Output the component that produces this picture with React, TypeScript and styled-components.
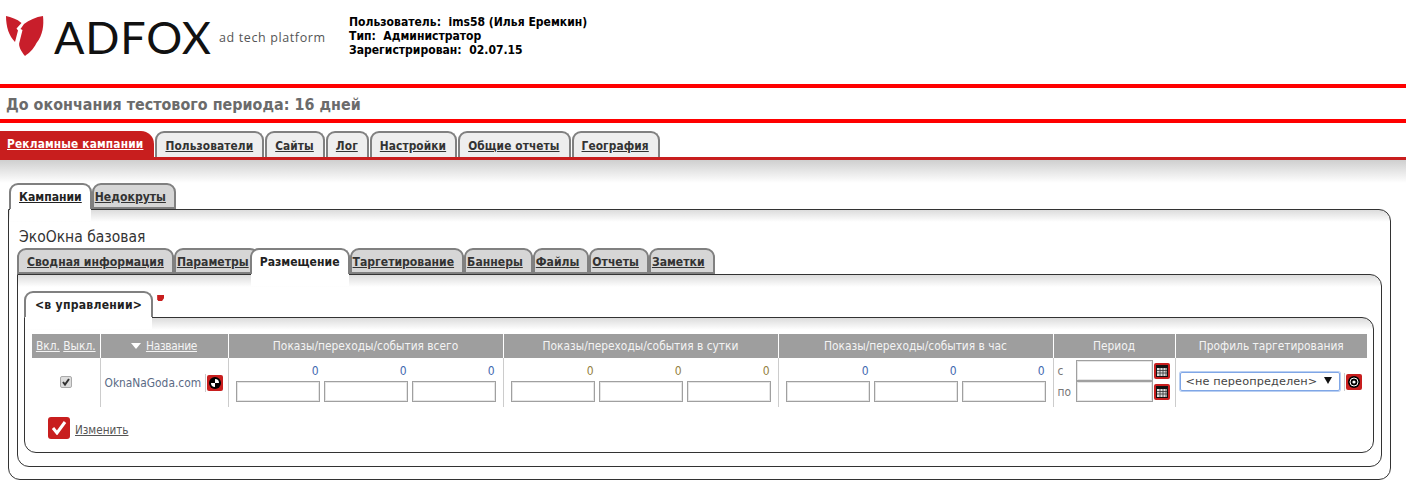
import React from "react";
import styled, { createGlobalStyle } from "styled-components";

const Global = createGlobalStyle`
  html, body { margin: 0; padding: 0; background: #fff; }
  body { font-family: "DejaVu Sans", Verdana, sans-serif; font-stretch: condensed; color: #333; }
  * { box-sizing: border-box; }
`;

const Page = styled.div`
  width: 1406px;
  height: 481px;
  overflow: hidden;
`;

const Header = styled.header`
  height: 84px;
  display: flex;
  align-items: flex-start;
`;

const LogoMark = styled.svg`
  width: 40px;
  height: 42px;
  margin: 15px 0 0 6px;
  flex: none;
`;

const LogoText = styled.div`
  font-family: Lato, sans-serif;
  font-stretch: normal;
  font-size: 45px;
  line-height: 45px;
  letter-spacing: 0.8px;
  color: #111;
  margin: 15px 0 0 8px;
  width: 165px;
`;

const Tagline = styled.div`
  font-family: "Open Sans", sans-serif;
  font-stretch: normal;
  font-size: 12.5px;
  letter-spacing: 0.62px;
  color: #555;
  margin: 29px 0 0 0;
  width: 130px;
  white-space: nowrap;
`;

const UserInfo = styled.div`
  margin-top: 15px;
  font-size: 12.05px;
  line-height: 14px;
  font-weight: 700;
  color: #000;
  white-space: pre;
`;

const Notice = styled.div`
  height: 39px;
  border-top: 4px solid #f00;
  border-bottom: 4px solid #f00;
  padding-left: 6px;
  font-size: 15.9px;
  letter-spacing: 0.03px;
  line-height: 33px;
  font-weight: 700;
  color: #6b6b6b;
  overflow: hidden;
`;

const MainTabs = styled.nav`
  display: flex;
  gap: 1px;
  margin-top: 8px;
  height: 26px;
`;

const MainTab = styled.a<{ $active?: boolean }>`
  height: 26px;
  font-size: 11.8px;
  letter-spacing: ${(p) => (p.$active ? "0.17px" : "0.1px")};
  line-height: 26px;
  font-weight: 700;
  text-decoration: underline;
  white-space: nowrap;
  background: ${(p) => (p.$active ? "#c81e1e" : "#eeeeee")};
  color: ${(p) => (p.$active ? "#fff" : "#333")};
  border: ${(p) => (p.$active ? "none" : "2px solid #808080")};
  border-bottom: none;
  padding: 0 ${(p) => (p.$active ? "11px" : "9px")} 0 ${(p) => (p.$active ? "7px" : "8px")};
  border-radius: ${(p) => (p.$active ? "0 13px 0 0" : "9px 9px 0 0")};
`;

const RedRule = styled.div`
  height: 3px;
  background: #c81e1e;
`;

const Fade = styled.div`
  height: 23px;
  background: linear-gradient(#cfcfcf, #fff);
`;

const Tabs = styled.div<{ $indent: number }>`
  display: flex;
  height: 26px;
  margin-left: ${(p) => p.$indent}px;
  position: relative;
  z-index: 1;
  align-items: flex-start;
`;

const Tab = styled.a<{ $active?: boolean; $tight?: boolean; $plain?: boolean; $overlap?: boolean }>`
  position: relative;
  height: 26px;
  padding: 0 8px 0 ${(p) => (p.$tight ? "1px" : "8px")};
  margin-left: ${(p) => (p.$overlap ? "-9px" : "0")};
  z-index: ${(p) => (p.$active ? 1 : 0)};
  font-size: 12.1px;
  line-height: 24px;
  font-weight: 700;
  color: ${(p) => (p.$active ? "#222" : "#333")};
  white-space: nowrap;
  text-decoration: ${(p) => (p.$plain ? "none" : "underline")};
  border: 2px solid #808080;
  border-bottom: ${(p) => (p.$active ? "none" : "2px solid #808080")};
  border-radius: 9px 9px 0 0;
  background: ${(p) => (p.$active ? "#fff" : "#d6d6d6")};

  &::after {
    content: "";
    display: ${(p) => (p.$active ? "block" : "none")};
    position: absolute;
    top: 100%;
    left: -1px;
    right: -1px;
    height: 12px;
    background: #fff;
  }
`;

const StateTab = styled(Tab)`
  letter-spacing: 0.25px;
  padding: 0 9px 0 9px;
`;

const Panel = styled.section<{ $mr: number; $h: number }>`
  margin: 0 ${(p) => p.$mr}px 0 0;
  height: ${(p) => p.$h}px;
  border: 1px solid #333;
  border-radius: 0 12px 12px 12px;
  background: linear-gradient(#dcdcdc, #fff 12px);
  position: relative;
`;

const OuterWrap = styled.div`
  padding-left: 8px;
`;

const CampaignTitle = styled.h1`
  margin: 0;
  padding: 17px 0 0 10px;
  height: 38px;
  font-size: 15.5px;
  line-height: 20px;
  font-weight: 400;
  color: #333;
`;

const InnerArea = styled.div<{ $pad: string }>`
  padding: ${(p) => p.$pad};
`;

const TabRow = styled.div`
  display: flex;
  align-items: flex-start;
`;

const CloseDot = styled.span`
  width: 7px;
  height: 6px;
  background: #c81e1e;
  margin: 4px 0 0 4px;
  clip-path: polygon(0 0, 100% 0, 100% 50%, 70% 100%, 15% 100%, 0 70%);
`;

const Grid = styled.table`
  border-collapse: collapse;
  table-layout: fixed;
  width: 1335px;
  margin: 16px 0 0 7px;
  font-size: 11.85px;
`;

const HeadCell = styled.th`
  height: 24px;
  padding: 0;
  background: #9e9e9e;
  color: #f4f4f4;
  font-weight: 400;
  text-align: center;
  border-left: 1px solid #fff;
  &:first-child { border-left: none; }
  a { color: #f4f4f4; text-decoration: underline; }
`;

const SortLink = styled.a`
  letter-spacing: -0.3px;
`;

const BodyCell = styled.td`
  height: 49px;
  padding: 0;
  border-left: 1px solid #ccc;
  vertical-align: top;
  &:first-child { border-left: none; }
`;

const CheckBox = styled.span`
  display: block;
  width: 12px;
  height: 12px;
  margin: 18px 0 0 28px;
  border: 1px solid #aaa;
  border-radius: 2px;
  background: #ddd;
  svg { display: block; }
`;

const NameWrap = styled.div`
  display: flex;
  align-items: center;
  height: 49px;
  padding-left: 4px;
  color: #5a6a85;
  white-space: nowrap;
`;

const IconBtn = styled.span`
  width: 16px;
  height: 16px;
  background: #c81e1e;
  border-radius: 2px;
  display: flex;
  align-items: center;
  justify-content: center;
  flex: none;
  svg { display: block; }
`;

const Sep = styled.span`
  width: 1px;
  height: 18px;
  background: #ccc;
  margin: 0 1px 0 4px;
`;

const Counters = styled.div`
  display: grid;
  grid-template-columns: repeat(3, 84px);
  column-gap: 4px;
  padding: 4px 0 0 7px;
`;

const Count = styled.div<{ $warm?: boolean }>`
  height: 19px;
  font-size: 12px;
  line-height: 18px;
  text-align: right;
  padding-right: 1px;
  color: ${(p) => (p.$warm ? "#94803f" : "#3f68b0")};
`;

const Field = styled.input`
  display: block;
  width: 84px;
  height: 21px;
  border: 1px solid #a0a0a0;
  box-shadow: inset 0 0 0 1px #e6e6e6;
  background: #fff;
  padding: 0;
`;

const PeriodRow = styled.div`
  display: flex;
  align-items: center;
  height: 21px;
  padding-left: 4px;
  color: #777;
`;

const PeriodLabel = styled.span`
  width: 18px;
  flex: none;
`;

const DateField = styled(Field)`
  width: 77px;
  margin-right: 1px;
`;

const PeriodStack = styled.div`
  padding-top: 2px;
`;

const ProfileWrap = styled.div`
  display: flex;
  align-items: center;
  height: 49px;
  padding: 0 0 0 4px;
  margin-top: -1px;
`;

const SelectBox = styled.div`
  width: 160px;
  height: 19px;
  border: 1px solid #7fa6e6;
  box-shadow: 0 0 0 1px #b9cff2;
  border-radius: 2px;
  display: flex;
  align-items: center;
  justify-content: space-between;
  padding: 0 7px 0 5px;
  font-size: 11.3px;
  letter-spacing: 0.1px;
  font-stretch: normal;
  color: #444;
  white-space: nowrap;
`;

const Caret = styled.span`
  width: 0;
  height: 0;
  border-left: 4px solid transparent;
  border-right: 4px solid transparent;
  border-top: 7px solid #111;
  margin-top: -2px;
`;

const SortArrow = styled.span`
  display: inline-block;
  width: 0;
  height: 0;
  border-left: 5px solid transparent;
  border-right: 5px solid transparent;
  border-top: 6px solid #fff;
  margin-right: 5px;
  vertical-align: 1px;
`;

const Footer = styled.div`
  display: flex;
  align-items: center;
  margin: 10px 0 0 23px;
  gap: 5px;
`;

const SaveBtn = styled.span`
  width: 22px;
  height: 22px;
  background: #c81e1e;
  border-radius: 3px;
  display: flex;
  align-items: center;
  justify-content: center;
`;

const FooterLink = styled.a`
  font-size: 11.6px;
  color: #555;
  text-decoration: underline;
  margin-top: 3px;
`;

const Crosshair = () => (
  <svg width="12" height="12" viewBox="0 0 12 12">
    <circle cx="6" cy="6" r="6" fill="#000" />
    <path d="M6 2a4 4 0 0 1 4 4H6zM6 10a4 4 0 0 1-4-4h4z" fill="#fff" />
  </svg>
);

const Target = () => (
  <svg width="12" height="12" viewBox="0 0 12 12">
    <circle cx="6" cy="6" r="6" fill="#000" />
    <circle cx="6" cy="6" r="4" fill="none" stroke="#fff" />
    <circle cx="6" cy="6" r="1.6" fill="#fff" />
  </svg>
);

const Calendar = () => (
  <svg width="12" height="12" viewBox="0 0 12 12">
    <rect width="12" height="12" fill="#111" />
    <path d="M1 3h10v8H1z" fill="#ddd" />
    <path d="M4 3v8M7 3v8M10 3v8M1 5.5h10M1 8h10" stroke="#333" strokeWidth="0.8" fill="none" />
  </svg>
);

const CounterCell = ({ warm }: { warm?: boolean }) => (
  <BodyCell>
    <Counters>
      {[0, 1, 2].map((i) => (
        <Count key={i} $warm={warm}>0</Count>
      ))}
      {[0, 1, 2].map((i) => (
        <Field key={i} />
      ))}
    </Counters>
  </BodyCell>
);

const mainTabs = ["Пользователи", "Сайты", "Лог", "Настройки", "Общие отчеты", "География"];
const columns = [68, 128, 275, 275, 275, 122, 192];

export default function App() {
  return (
    <Page>
      <Global />
      <Header>
        <LogoMark viewBox="0 0 40 42">
          <path d="M0 1C5 2 11 4 15.500 8L10.500 13.500L12 15.500L9 27C3 21 0 12 0 1Z" fill="#c81e2b" />
          <path d="M37 1C38 10 37 20 30.500 28C27 35 23 38 19 41C15 36 12 31 13.500 27L16.500 15L14.500 14L18 9C23 5 30 2 37 1Z" fill="#c81e2b" />
        </LogoMark>
        <LogoText>ADFOX</LogoText>
        <Tagline>ad tech platform</Tagline>
        <UserInfo>{"Пользователь:  ims58 (Илья Еремкин)\nТип:  Администратор\nЗарегистрирован:  02.07.15"}</UserInfo>
      </Header>
      <Notice>До окончания тестового периода: 16 дней</Notice>
      <MainTabs>
        <MainTab $active>Рекламные кампании</MainTab>
        {mainTabs.map((t) => (
          <MainTab key={t}>{t}</MainTab>
        ))}
      </MainTabs>
      <RedRule />
      <Fade />
      <OuterWrap>
        <Tabs $indent={1}>
          <Tab $active>Кампании</Tab>
          <Tab $tight>Недокруты</Tab>
        </Tabs>
        <Panel $mr={15} $h={271}>
          <CampaignTitle>ЭкоОкна базовая</CampaignTitle>
          <InnerArea $pad="0 8px">
            <Tabs $indent={0}>
              <Tab>Сводная информация</Tab>
              <Tab $tight>Параметры</Tab>
              <Tab $active $plain $overlap>Размещение</Tab>
              <Tab $tight>Таргетирование</Tab>
              <Tab $tight>Баннеры</Tab>
              <Tab $tight>Файлы</Tab>
              <Tab $tight>Отчеты</Tab>
              <Tab $tight>Заметки</Tab>
            </Tabs>
            <Panel $mr={0} $h={193}>
              <InnerArea $pad="16px 7px 0 6px">
                <TabRow>
                  <Tabs $indent={0}>
                    <StateTab $active $plain>&lt;в управлении&gt;</StateTab>
                  </Tabs>
                  <CloseDot />
                </TabRow>
                <Panel $mr={0} $h={136}>
                  <Grid>
                    <colgroup>
                      {columns.map((w, i) => (
                        <col key={i} width={w} />
                      ))}
                    </colgroup>
                    <thead>
                      <tr>
                        <HeadCell><a>Вкл.</a> <a>Выкл.</a></HeadCell>
                        <HeadCell><SortArrow /><SortLink>Название</SortLink></HeadCell>
                        <HeadCell>Показы/переходы/события всего</HeadCell>
                        <HeadCell>Показы/переходы/события в сутки</HeadCell>
                        <HeadCell>Показы/переходы/события в час</HeadCell>
                        <HeadCell>Период</HeadCell>
                        <HeadCell>Профиль таргетирования</HeadCell>
                      </tr>
                    </thead>
                    <tbody>
                      <tr>
                        <BodyCell>
                          <CheckBox>
                            <svg width="10" height="10" viewBox="0 0 10 10">
                              <path d="M2 5l2 2.500L8 2" fill="none" stroke="#333" strokeWidth="2" />
                            </svg>
                          </CheckBox>
                        </BodyCell>
                        <BodyCell>
                          <NameWrap>
                            OknaNaGoda.com
                            <Sep />
                            <IconBtn><Crosshair /></IconBtn>
                          </NameWrap>
                        </BodyCell>
                        <CounterCell />
                        <CounterCell warm />
                        <CounterCell />
                        <BodyCell>
                          <PeriodStack>
                            <PeriodRow>
                              <PeriodLabel>с</PeriodLabel>
                              <DateField />
                              <IconBtn><Calendar /></IconBtn>
                            </PeriodRow>
                            <PeriodRow>
                              <PeriodLabel>по</PeriodLabel>
                              <DateField />
                              <IconBtn><Calendar /></IconBtn>
                            </PeriodRow>
                          </PeriodStack>
                        </BodyCell>
                        <BodyCell>
                          <ProfileWrap>
                            <SelectBox>&lt;не переопределен&gt;<Caret /></SelectBox>
                            <Sep />
                            <IconBtn><Target /></IconBtn>
                          </ProfileWrap>
                        </BodyCell>
                      </tr>
                    </tbody>
                  </Grid>
                  <Footer>
                    <SaveBtn>
                      <svg width="16" height="14" viewBox="0 0 16 14">
                        <path d="M2 7l4 5 8-11" fill="none" stroke="#fff" strokeWidth="3" />
                      </svg>
                    </SaveBtn>
                    <FooterLink>Изменить</FooterLink>
                  </Footer>
                </Panel>
              </InnerArea>
            </Panel>
          </InnerArea>
        </Panel>
      </OuterWrap>
    </Page>
  );
}
